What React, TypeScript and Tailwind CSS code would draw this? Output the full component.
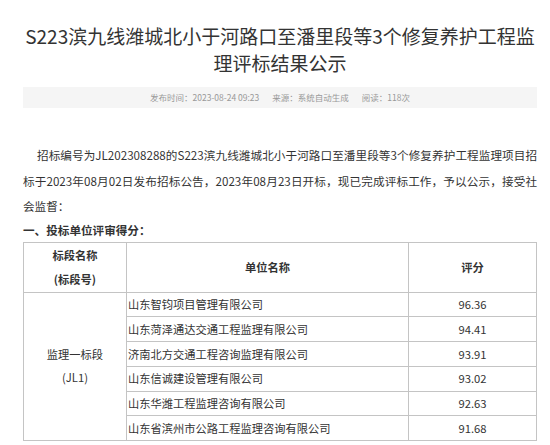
const rows = [
  { name: "山东智钧项目管理有限公司", score: "96.36" },
  { name: "山东菏泽通达交通工程监理有限公司", score: "94.41" },
  { name: "济南北方交通工程咨询监理有限公司", score: "93.91" },
  { name: "山东信诚建设管理有限公司", score: "93.02" },
  { name: "山东华潍工程监理咨询有限公司", score: "92.63" },
  { name: "山东省滨州市公路工程监理咨询有限公司", score: "91.68" },
];

export default function App() {
  return (
    <div
      className="w-[550px] h-[445px] overflow-hidden bg-white text-[#333]"
      style={{ fontFamily: '"Noto Sans CJK SC", "Noto Sans", sans-serif' }}
    >
      <div className="ml-[23px] w-[514px]">
        <h1 className="pt-[22px] text-center text-[19px] leading-[27px] font-normal text-[#333]">
          S223滨九线潍城北小于河路口至潘里段等3个修复养护工程监理评标结果公示
        </h1>

        {/* meta */}
        <div className="mt-[11px] h-[21px] bg-[#f5f5f5] flex items-center justify-center gap-[13px] text-[8.5px] text-[#999]">
          <span>发布时间：2023-08-24 09:23</span>
          <span>来源：系统自动生成</span>
          <span>阅读：118次</span>
        </div>

        <p className="mt-[35px] text-[11.6px] leading-[25.5px] text-justify indent-[14px]">
          招标编号为JL202308288的S223滨九线潍城北小于河路口至潘里段等3个修复养护工程监理项目招标于2023年08月02日发布招标公告，2023年08月23日开标，现已完成评标工作，予以公示，接受社会监督：
        </p>
        <p className="text-[11.6px] leading-[20px] font-bold">一、投标单位评审得分：</p>

        <table className="mt-[2px] w-[513px] table-fixed border-collapse text-[11.25px]">
          <colgroup>
            <col className="w-[103px]" />
            <col className="w-[282px]" />
            <col className="w-[128px]" />
          </colgroup>
          <tbody>
            <tr className="h-[49px]">
              <td className="border border-[#c4c4c4] text-center font-bold leading-[24.5px]">
                标段名称
                <br />
                (标段号)
              </td>
              <td className="border border-[#c4c4c4] text-center font-bold">单位名称</td>
              <td className="border border-[#c4c4c4] text-center font-bold">评分</td>
            </tr>
            {rows.map((r, i) => (
              <tr key={r.name} className="h-[24.8px]">
                {i === 0 && (
                  <td
                    rowSpan={6}
                    className="border border-[#c4c4c4] text-center leading-[23px]"
                  >
                    监理一标段
                    <br />
                    (JL1)
                  </td>
                )}
                <td className="border border-[#c4c4c4] pl-[1px] whitespace-nowrap">{r.name}</td>
                <td className="border border-[#c4c4c4] text-center">{r.score}</td>
              </tr>
            ))}
          </tbody>
        </table>
      </div>
    </div>
  );
}
